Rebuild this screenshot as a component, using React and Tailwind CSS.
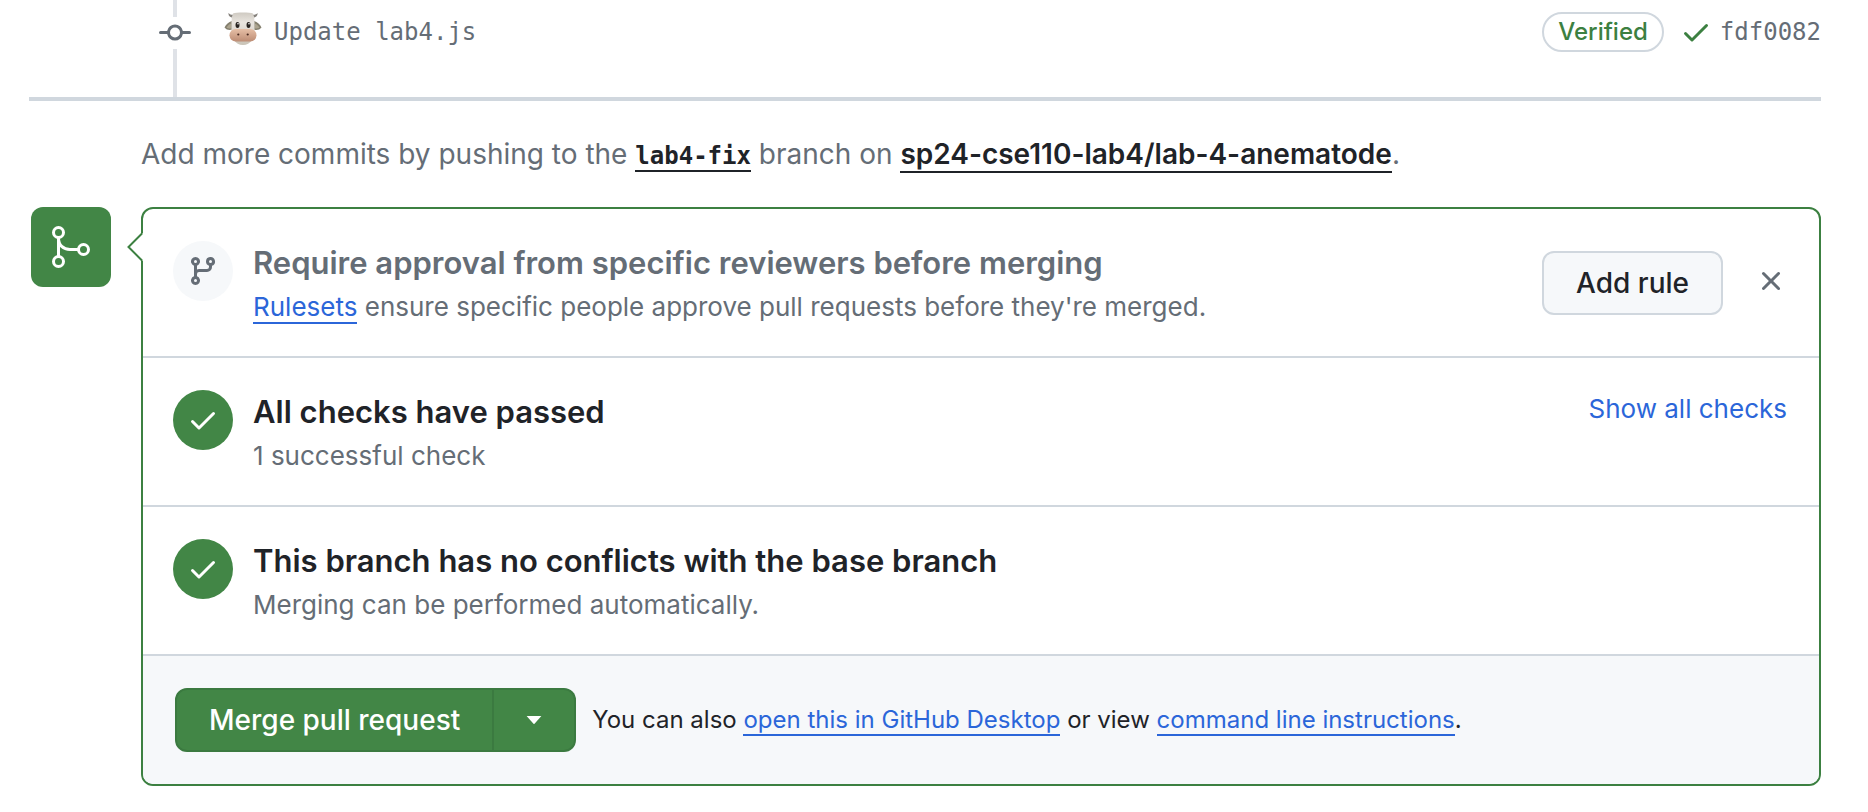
const icons = {
  commit:
    'M11.93 8.5a4.002 4.002 0 0 1-7.86 0H.75a.75.75 0 0 1 0-1.5h3.32a4.002 4.002 0 0 1 7.86 0h3.32a.75.75 0 0 1 0 1.5Zm-1.43-.75a2.5 2.5 0 1 0-5 0 2.5 2.5 0 0 0 5 0Z',
  check:
    'M13.78 4.22a.75.75 0 0 1 0 1.06l-7.25 7.25a.75.75 0 0 1-1.06 0L2.22 9.28a.751.751 0 0 1 .018-1.042.751.751 0 0 1 1.042-.018L6 10.94l6.72-6.72a.75.75 0 0 1 1.06 0Z',
  close:
    'M3.72 3.72a.75.75 0 0 1 1.06 0L8 6.94l3.22-3.22a.749.749 0 0 1 1.275.326.749.749 0 0 1-.215.734L9.06 8l3.22 3.22a.749.749 0 0 1-.326 1.275.749.749 0 0 1-.734-.215L8 9.06l-3.22 3.22a.751.751 0 0 1-1.042-.018.751.751 0 0 1-.018-1.042L6.94 8 3.72 4.78a.75.75 0 0 1 0-1.06Z',
  branch:
    'M9.5 3.25a2.25 2.25 0 1 1 3 2.122V6A2.5 2.5 0 0 1 10 8.5H6a1 1 0 0 0-1 1v1.128a2.251 2.251 0 1 1-1.5 0V5.372a2.25 2.25 0 1 1 1.5 0v1.836A2.493 2.493 0 0 1 6 7h4a1 1 0 0 0 1-1v-.628A2.25 2.25 0 0 1 9.5 3.25Zm-6 0a.75.75 0 1 0 1.5 0 .75.75 0 0 0-1.5 0Zm8.25-.75a.75.75 0 1 0 0 1.5.75.75 0 0 0 0-1.5ZM4.25 12a.75.75 0 1 0 0 1.5.75.75 0 0 0 0-1.5Z',
};

function Icon({ name, className = '' }) {
  return (
    <svg viewBox="0 0 16 16" fill="currentColor" aria-hidden="true" className={`size-8 shrink-0 ${className}`}>
      <path d={icons[name]} />
    </svg>
  );
}

function MergeIcon() {
  return (
    <svg viewBox="0 0 24 24" fill="none" stroke="currentColor" strokeWidth="1.5" aria-hidden="true" className="size-12">
      <circle cx="5.75" cy="4.75" r="2.5" />
      <circle cx="5.75" cy="19.25" r="2.5" />
      <circle cx="18.25" cy="13.25" r="2.5" />
      <path d="M5.75 7.25v9.5M5.75 7.5c0 3.6 2.4 5.75 5.75 5.75h4.25" />
    </svg>
  );
}

function CowAvatar() {
  return (
    <svg viewBox="0 0 38 34" aria-hidden="true" className="mt-3 h-[34px] w-[38px] shrink-0 self-start">
      <defs>
        <linearGradient id="cow-face" x1="0" y1="0" x2="0" y2="1">
          <stop offset="0" stopColor="#cfcac2" />
          <stop offset="0.3" stopColor="#e9e5df" />
          <stop offset="1" stopColor="#c9c3b6" />
        </linearGradient>
        <linearGradient id="cow-nose" x1="0" y1="0" x2="0" y2="1">
          <stop offset="0" stopColor="#e6bfa6" />
          <stop offset="1" stopColor="#bd8c74" />
        </linearGradient>
      </defs>
      <path d="M4.500 1C4 4 6.500 5.500 10 6l2-3.500C9 3 6 3 4.500 1ZM33.500 1C34 4 31.500 5.500 28 6l-2-3.500C29 3 32 3 33.500 1Z" fill="#85817c" />
      <path d="M8 9C4.500 10 2 12.500 0.500 15.500 2.500 18 5.500 18.500 8.500 17.500ZM30 9c3.500 1 6 3.500 7.500 6.500-2 2.500-5 3-8 2Z" fill="#85806f" />
      <path d="M7 11.500C5 12.500 3.500 14 2.500 15.500c1.500 1 3 1.200 5 1ZM31 11.500c2 1 3.500 2.500 4.500 4-1.500 1-3 1.200-5 1Z" fill="#aca48f" />
      <path d="M9 1.500C12 .3 26 .3 29 1.500 31 6 30.500 12 30.500 17 30.500 26 27 33 19 33S7.500 26 7.500 17C7.500 12 7 6 9 1.500Z" fill="url(#cow-face)" />
      <rect x="5.500" y="17" width="27" height="12.500" rx="6.200" fill="url(#cow-nose)" />
      <ellipse cx="13.500" cy="13" rx="2" ry="3" fill="#26221f" />
      <ellipse cx="24.500" cy="13" rx="2" ry="3" fill="#26221f" />
      <circle cx="14" cy="11.800" r=".8" fill="#fff" />
      <circle cx="25" cy="11.800" r=".8" fill="#fff" />
      <circle cx="14.300" cy="22.500" r="1.100" fill="#49291f" />
      <circle cx="23.700" cy="22.500" r="1.100" fill="#49291f" />
    </svg>
  );
}

function StatusRow({ icon, circle, title, titleColor = 'text-[#1f2328]', children, action }) {
  return (
    <section className="flex items-start border-b-2 border-[#d0d7de] pt-8 pr-8 pb-[27px] pl-[30px]">
      <span className={`flex size-[60px] shrink-0 items-center justify-center rounded-full ${circle}`}>
        <Icon name={icon} />
      </span>
      <div className="ml-5 min-w-0 flex-1">
        <h3 className={`text-[31px] leading-[44px] font-semibold ${titleColor}`}>{title}</h3>
        <p className="text-[26px] leading-[44px] text-[#656d76]">{children}</p>
      </div>
      {action}
    </section>
  );
}

const mono = "font-['DejaVu_Sans_Mono','Liberation_Mono',monospace]";
const blueLink = 'border-b-2 border-[#2b66d9] text-[#2b66d9]';
const darkLink = 'border-b-2 border-[#1f2328] font-semibold text-[#1f2328]';

export default function App() {
  return (
    <main className="bg-white pr-[47px] pl-[29px] font-[Inter,sans-serif] text-[#1f2328]">
      <div className="flex h-[97px] items-start pl-[130px]">
        <div className="flex h-full w-8 shrink-0 flex-col items-center">
          <span className="h-[17px] w-1 bg-[#dfe2e7]" />
          <Icon name="commit" className="text-[#656d76]" />
          <span className="w-1 flex-1 bg-[#dfe2e7]" />
        </div>
        <div className="flex h-16 flex-1 items-center pl-[33px]">
          <CowAvatar />
          <a href="#commit" className={`ml-3 text-[24px] text-[#656d76] ${mono}`}>Update lab4.js</a>
          <button type="button" className="ml-auto h-10 rounded-full border-2 border-[#d0d7de] px-[14px] text-[24px] leading-9 font-medium text-[#3c8041]">
            Verified
          </button>
          <Icon name="check" className="ml-4 text-[#3c8041]" />
          <a href="#fdf0082" className={`ml-2 text-[24px] text-[#656d76] ${mono}`}>fdf0082</a>
        </div>
      </div>

      <hr className="border-0 border-t-4 border-[#d0d7de]" />

      <p className="pt-8 pb-[30px] pl-[112px] text-[28px] leading-[42px] text-[#656d76]">
        Add more commits by pushing to the{' '}
        <a href="#lab4-fix" className={`text-[24px] ${darkLink} ${mono}`}>lab4-fix</a> branch on{' '}
        <a href="#repo" className={darkLink}>sp24-cse110-lab4/lab-4-anematode</a>.
      </p>

      <div className="flex items-start gap-[30px] pl-[2px]">
        <div className="flex size-20 shrink-0 items-center justify-center rounded-xl bg-[#428646] text-white">
          <MergeIcon />
        </div>
        <div className="relative min-w-0 flex-1 rounded-xl border-2 border-[#3c8041]">
          <svg viewBox="0 0 16 32" aria-hidden="true" className="absolute top-[22px] -left-4 h-8 w-4">
            <path d="M16 2 2 16 16 30Z" fill="#fff" />
            <path d="M15 2.500 1.500 16 15 29.500" fill="none" stroke="#3c8041" strokeWidth="2" />
          </svg>
          <StatusRow
            icon="branch"
            circle="bg-[#f6f8fa] text-[#656d76]"
            title="Require approval from specific reviewers before merging"
            titleColor="text-[#656d76]"
            action={
              <div className="mt-[10px] flex items-center">
                <button type="button" className="h-16 rounded-xl border-2 border-[#d0d7de] bg-[#f6f8fa] px-8 text-[28px] font-medium">
                  Add rule
                </button>
                <button type="button" aria-label="Dismiss" className="ml-8 pb-1 text-[#656d76]">
                  <Icon name="close" />
                </button>
              </div>
            }
          >
            <a href="#rulesets" className={blueLink}>Rulesets</a> ensure specific people approve pull requests before they're merged.
          </StatusRow>
          <StatusRow
            icon="check"
            circle="bg-[#428646] text-white"
            title="All checks have passed"
            action={<button type="button" className="text-[26px] leading-[38px] text-[#2b66d9]">Show all checks</button>}
          >
            1 successful check
          </StatusRow>
          <StatusRow icon="check" circle="bg-[#428646] text-white" title="This branch has no conflicts with the base branch">
            Merging can be performed automatically.
          </StatusRow>
          <footer className="flex items-center gap-4 rounded-b-[10px] bg-[#f6f8fa] p-8">
            <div className="flex shrink-0 text-white">
              <button type="button" className="h-16 rounded-l-xl border-2 border-[#3b7a40] bg-[#428646] px-8 text-[28px] font-medium">
                Merge pull request
              </button>
              <button type="button" aria-label="Select merge method" className="flex h-16 w-[82px] items-center justify-center rounded-r-xl border-2 border-l-0 border-[#3b7a40] bg-[#428646]">
                <svg viewBox="0 0 16 8" fill="currentColor" aria-hidden="true" className="h-2 w-4">
                  <path d="M.6 0h14.800L8.500 7.700q-.5.500-1 0Z" />
                </svg>
              </button>
            </div>
            <p className="text-[24px] leading-9">
              You can also <a href="#desktop" className={blueLink}>open this in GitHub Desktop</a> or view{' '}
              <a href="#cli" className={blueLink}>command line instructions</a>.
            </p>
          </footer>
        </div>
      </div>
    </main>
  );
}
